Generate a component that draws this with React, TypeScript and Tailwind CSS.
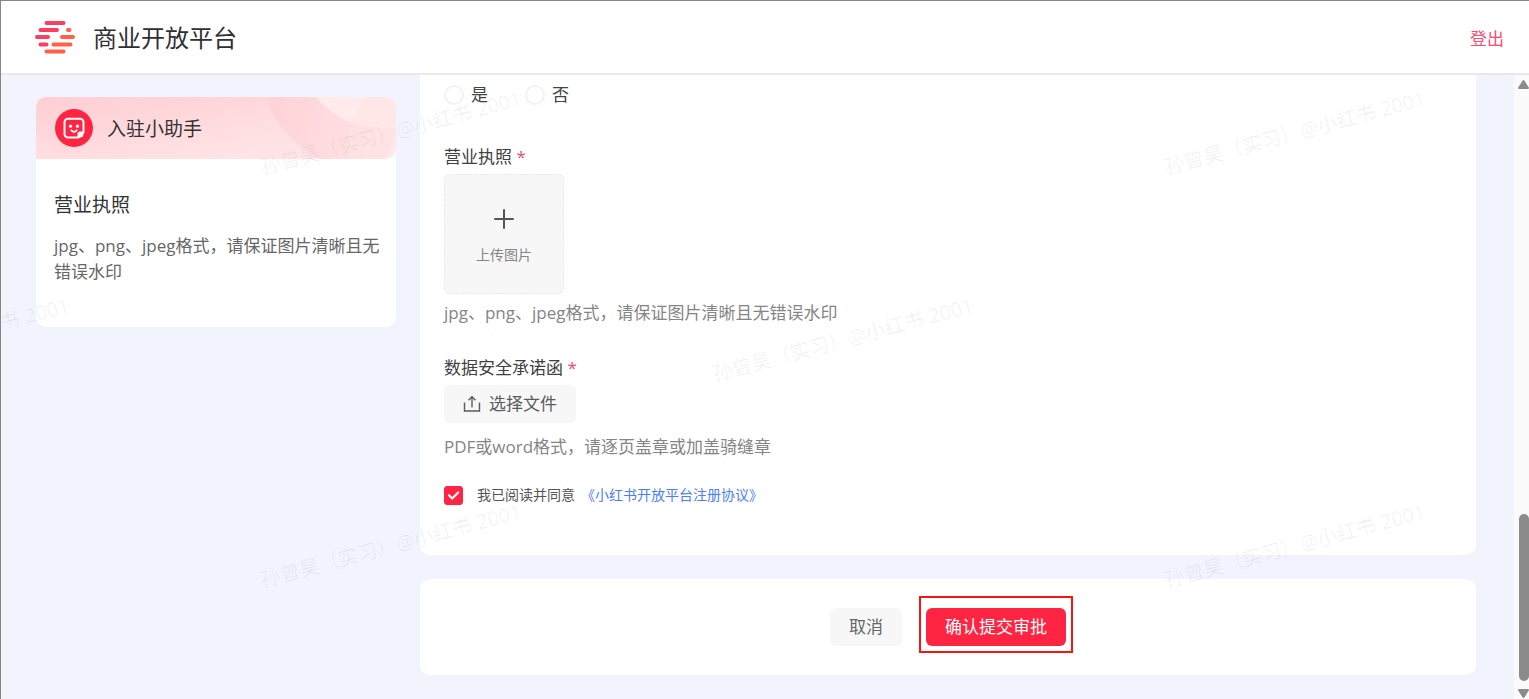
import { useState } from 'react'
import type { ReactNode } from 'react'

const WATERMARK = '孙曾昊（实习）@小红书 2001'

const WATERMARK_SPOTS = [
  'left-[390px] top-[132px]',
  'left-[1294px] top-[132px]',
  'left-[-62px] top-[339px]',
  'left-[842px] top-[339px]',
  'left-[390px] top-[545px]',
  'left-[1294px] top-[545px]',
]

function Logo() {
  return (
    <svg width="42" height="34" viewBox="0 0 42 34" fill="none" strokeWidth="4" strokeLinecap="round">
      <g stroke="#fb3d62">
        <path d="M12.5 3h17M6.5 10H23M3 17h11M6.5 24.5h6" />
      </g>
      <g stroke="#ff6047">
        <path d="M34 10h1.5M28 17h11M19.5 24.5h17M12.5 31.5h17" />
      </g>
    </svg>
  )
}

function HelperIcon() {
  return (
    <svg width="38" height="38" viewBox="0 0 38 38" fill="none" className="shrink-0">
      <circle cx="19" cy="19" r="19" fill="#ff2442" />
      <path
        d="M13 9.8h12a3.5 3.5 0 0 1 3.500 3.500v10L23.300 28.500H13A3.500 3.500 0 0 1 9.500 25V13.300A3.500 3.500 0 0 1 13 9.800Z"
        stroke="#fff"
        strokeWidth="2"
        strokeLinejoin="round"
      />
      <path d="M28.500 22.500V25a3.500 3.500 0 0 1-3.500 3.500h-2.500v-3.300a2.700 2.700 0 0 1 2.700-2.700Z" fill="#fff" />
      <circle cx="15.500" cy="17.200" r="1.600" fill="#fff" />
      <circle cx="22.500" cy="17.200" r="1.600" fill="#fff" />
      <path d="M16.300 21.300c1.400 2 4 2 5.400 0" stroke="#fff" strokeWidth="1.800" strokeLinecap="round" />
    </svg>
  )
}

function BannerArt() {
  return (
    <svg
      className="absolute inset-0 h-full w-full"
      viewBox="0 0 360 62"
      preserveAspectRatio="xMaxYMid slice"
      fill="none"
    >
      <defs>
        <linearGradient id="ring" x1="229" y1="0" x2="345" y2="30" gradientUnits="userSpaceOnUse">
          <stop stopColor="#ffd2d7" />
          <stop offset="1" stopColor="#ffe1e4" />
        </linearGradient>
      </defs>
      <path d="M229 0C238 26 258 48 284 62H349C353 54 357 44 360 32C326 33 297 22 280 0Z" fill="url(#ring)" />
      <path d="M280 0C297 22 326 33 360 32V0Z" fill="#ffeaec" />
      <path d="M330 0C316 20 309 40 312 62H349C353 54 357 44 360 32V0Z" fill="#ffe2e5" fillOpacity="0.6" />
      <path d="M0 34c6 12 16 21 30 28H0Z" fill="#ffdfe3" fillOpacity="0.6" />
    </svg>
  )
}

function UploadIcon() {
  return (
    <svg width="18" height="18" viewBox="0 0 18 18" fill="none" stroke="#5c5c5c" strokeWidth="1.400">
      <path d="M1.500 7.500v8.500h15V7.500M9 12.500V1.800M5.500 5.200 9 1.700l3.500 3.500" />
    </svg>
  )
}

function FieldLabel({ htmlFor, children }: { htmlFor: string; children: ReactNode }) {
  return (
    <label htmlFor={htmlFor} className="block text-[17px] leading-6 text-[#404040]">
      {children} <span className="text-[#ff4a68]">*</span>
    </label>
  )
}

function Assistant() {
  return (
    <aside className="mt-[22px] w-[360px] shrink-0 self-start overflow-hidden rounded-[10px] bg-white pb-[42px]">
      <div className="relative flex h-[62px] items-center overflow-hidden rounded-r-[10px] bg-linear-to-br from-[#ffced3] to-[#ffeaec] pl-[19px]">
        <BannerArt />
        <div className="relative flex items-center gap-[14px]">
          <HelperIcon />
          <h2 className="pt-0.5 text-[19px] leading-7 text-[#333]">入驻小助手</h2>
        </div>
      </div>
      <div className="pt-8 pr-3 pl-[18px]">
        <h3 className="text-[19px] leading-7 text-[#333]">营业执照</h3>
        <p className="mt-[14px] text-[17px] leading-[26px] text-[#666]">
          jpg、png、jpeg格式，请保证图片清晰且无错误水印
        </p>
      </div>
    </aside>
  )
}

function ScrollRail() {
  return (
    <div className="flex w-[15px] shrink-0 flex-col items-center bg-[#fafafa] pt-[5px] pl-1" aria-hidden="true">
      <svg width="11" height="9" viewBox="0 0 11 9" fill="#8b8b8b">
        <path d="M4.500.8a1.200 1.200 0 0 1 2 0L10.800 7.400Q11.200 9 10 9H1Q-.2 9 .2 7.400Z" />
      </svg>
      <div className="mt-auto h-[167px] w-[10px] rounded-full bg-[#8b8b8b]" />
      <svg className="mt-2 mb-px shrink-0" width="11" height="9" viewBox="0 0 11 9" fill="#8b8b8b">
        <path d="M4.500 8.200a1.200 1.200 0 0 0 2 0L10.800 1.600Q11.200 0 10 0H1Q-.2 0 .2 1.600Z" />
      </svg>
    </div>
  )
}

export default function App() {
  const [choice, setChoice] = useState('')
  const [agreed, setAgreed] = useState(true)

  return (
    <div className="relative flex h-screen flex-col overflow-hidden border-t border-l border-[#85858a] bg-[#f1f4fd] font-['Open_Sans','Noto_Sans_CJK_SC',sans-serif]">
      <header className="flex h-[74px] shrink-0 items-center justify-between border-b-2 border-[#e7e8f0] bg-white pr-[25px] pl-[33px]">
        <div className="flex items-center gap-[17px]">
          <Logo />
          <h1 className="pt-0.5 text-2xl text-[#303034]">商业开放平台</h1>
        </div>
        <a href="#logout" className="pt-1 text-[17px] text-[#ff4a70]">登出</a>
      </header>

      <div className="flex min-h-0 flex-1">
        <div className="flex min-w-0 flex-1 gap-6 pr-[38px] pl-[35px]">
          <Assistant />

          <main className="min-w-0 flex-1">
            <form onSubmit={e => e.preventDefault()}>
              <section className="rounded-b-[10px] bg-white px-6 pt-[10px] pb-[50px]">
                <div className="flex h-5 items-center gap-[37px]" role="radiogroup">
                  {['是', '否'].map(v => (
                    <label key={v} className="flex items-center gap-[7px] text-[17px] leading-5 text-[#444]">
                      <input
                        type="radio"
                        name="choice"
                        value={v}
                        checked={choice === v}
                        onChange={() => setChoice(v)}
                        className="size-5 appearance-none rounded-full border-2 border-[#f2f2f2] bg-white checked:border-[6px] checked:border-[#ff2442]"
                      />
                      {v}
                    </label>
                  ))}
                </div>

                <div className="mt-10">
                  <FieldLabel htmlFor="license">营业执照</FieldLabel>
                  <button
                    id="license"
                    type="button"
                    className="mt-[5px] flex size-[120px] flex-col items-center rounded-md border border-dashed border-[#e8e8e8] bg-[#f7f7f7] pt-[34px] text-sm text-[#858585]"
                  >
                    <svg width="20" height="20" viewBox="0 0 20 20" stroke="#555" strokeWidth="2" strokeLinecap="round">
                      <path d="M10 1v18M1 10h18" />
                    </svg>
                    <span className="mt-4 leading-5">上传图片</span>
                  </button>
                  <p className="mt-[7px] text-[17px] leading-6 text-[#858585]">
                    jpg、png、jpeg格式，请保证图片清晰且无错误水印
                  </p>
                </div>

                <div className="mt-[31px]">
                  <FieldLabel htmlFor="commitment">数据安全承诺函</FieldLabel>
                  <button
                    id="commitment"
                    type="button"
                    className="mt-[5px] flex h-[38px] items-center gap-2 rounded-md bg-[#f7f7f7] px-[19px] text-[17px] text-[#5c5c5c]"
                  >
                    <UploadIcon />
                    选择文件
                  </button>
                  <p className="mt-3 text-[17px] leading-6 text-[#858585]">PDF或word格式，请逐页盖章或加盖骑缝章</p>
                </div>

                <div className="mt-[26px] flex h-5 items-center text-sm text-[#555]">
                  <span className="relative mr-[14px] flex size-[19px]">
                    <input
                      id="agree"
                      type="checkbox"
                      checked={agreed}
                      onChange={e => setAgreed(e.target.checked)}
                      className="size-full appearance-none rounded-[3px] border border-[#ddd] checked:border-[#ff2442] checked:bg-[#ff2442]"
                    />
                    {agreed && (
                      <svg className="pointer-events-none absolute inset-0" width="19" height="19" viewBox="0 0 19 19" fill="none">
                        <path d="m5 9.300 3.200 3.200 6-6" stroke="#fff" strokeWidth="2.200" strokeLinecap="round" strokeLinejoin="round" />
                      </svg>
                    )}
                  </span>
                  <label htmlFor="agree">我已阅读并同意</label>
                  <a href="#agreement" className="ml-1.5 text-[#4c7dff]">《小红书开放平台注册协议》</a>
                </div>
              </section>

              <section className="mt-6 flex h-24 items-center justify-center gap-6 rounded-[10px] bg-white text-[17px]">
                <button type="button" className="h-[38px] rounded-md bg-[#f7f7f7] px-[19px] text-[#666]">取消</button>
                <div className="relative">
                  <button type="submit" className="h-[38px] rounded-md bg-[#ff2442] px-[19px] text-white">确认提交审批</button>
                  <span className="pointer-events-none absolute -inset-x-[7px] -top-3 -bottom-[7px] border-2 border-[#f5160e]" />
                </div>
              </section>
            </form>
          </main>
        </div>
        <ScrollRail />
      </div>

      <div className="pointer-events-none absolute inset-0 overflow-hidden" aria-hidden="true">
        {WATERMARK_SPOTS.map(spot => (
          <span
            key={spot}
            className={`absolute ${spot} -translate-x-1/2 -translate-y-1/2 -rotate-15 text-xl whitespace-nowrap text-black/6`}
          >
            {WATERMARK}
          </span>
        ))}
      </div>
    </div>
  )
}
